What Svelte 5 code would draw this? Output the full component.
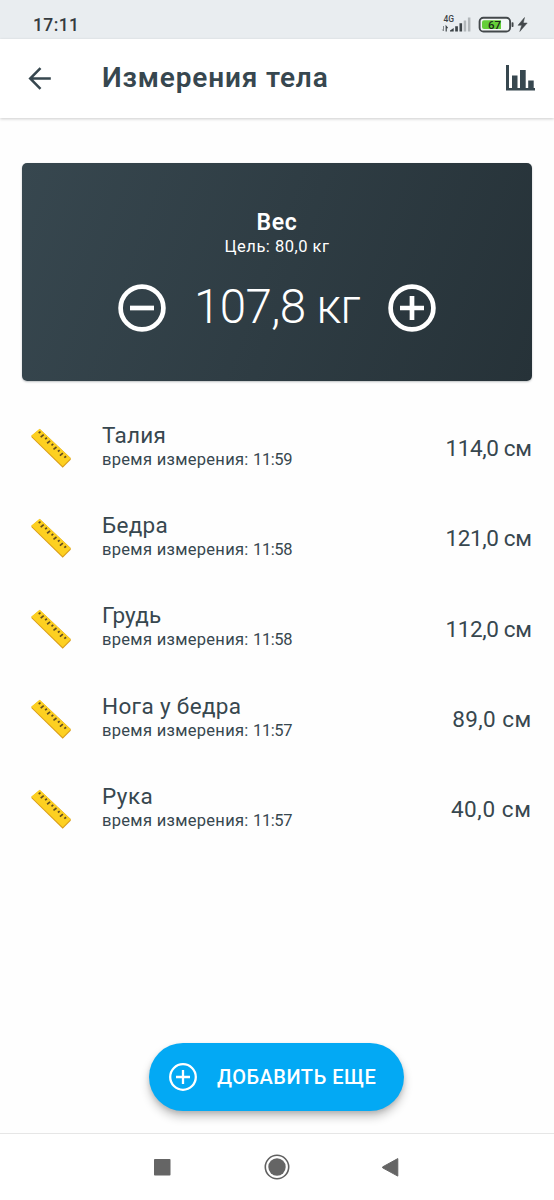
<script>
  const measurements = [
    { name: 'Талия', time: '11:59', value: '114,0 см', nameGap: 0.3, valueGap: -0.38 },
    { name: 'Бедра', time: '11:58', value: '121,0 см', nameGap: 0.3, valueGap: -0.38 },
    { name: 'Грудь', time: '11:58', value: '112,0 см', nameGap: 0.15, valueGap: -0.38 },
    { name: 'Нога у бедра', time: '11:57', value: '89,0 см', nameGap: 0.35, valueGap: 0.42 },
    { name: 'Рука', time: '11:57', value: '40,0 см', nameGap: 0.45, valueGap: 0.6 }
  ];
  const ticks = [0, 1, 2, 3, 4, 5, 6, 7, 8];
</script>

<div class="screen">
  <div class="status">
    <span class="clock">17:11</span>
    <svg class="indicators" width="90" height="24" viewBox="440 12 90 24">
      <text x="443.5" y="22" font-size="8.500" font-weight="500" fill="#3c4347">4G</text>
      <path d="M443.500 26v5M442.300 29.500l1.200 1.500" stroke="#85898c" fill="none" />
      <path d="M446.200 31.500v-5l1.400 1.700" stroke="#3c4347" stroke-width="1.200" fill="none" />
      <path d="M450 31.500v-1l3.700-2.500v3.500zM455.200 26.200h2.700v5.300h-2.700zM459.500 23.200h2.600v8.300h-2.600z" fill="#3c4347" />
      <path d="M463.700 20.500h2.500v11h-2.500zM467.900 17.500h2.500v14h-2.500z" fill="#b2b7ba" />
      <rect x="479.600" y="17.700" width="30.500" height="13.800" rx="3.800" fill="#f4f7f7" stroke="#43484b" stroke-width="1.900" />
      <path d="M484 20.200h17v8.800H484a2 2 0 0 1-2-2v-4.800a2 2 0 0 1 2-2z" fill="#65cf38" />
      <rect x="511.600" y="22.300" width="1.900" height="4.700" rx=".7" fill="#43484b" />
      <text x="494.500" y="28.700" text-anchor="middle" font-size="11.500" font-weight="500" fill="#1d2a1c">67</text>
      <path d="M524.500 17.500 518 25.300h3.700L519.800 31.500l7.400-8.500h-3.900z" fill="#43484b" stroke="#43484b" stroke-width=".5" />
    </svg>
  </div>

  <header>
    <button class="back" aria-label="Назад">
      <svg width="24" height="24" viewBox="0 0 24 24" fill="none" stroke="#37474f" stroke-width="2.500">
        <path d="M22.800 11.500H2.500M12.500 1.200 2.200 11.500 12.500 21.800" />
      </svg>
    </button>
    <h1>Измерения тела</h1>
    <button class="chart" aria-label="Статистика">
      <svg width="30" height="27" viewBox="0 0 30 27" fill="#37474f">
        <path d="M0 0h3v23h3V10.500h5.500V23H14V5h5.700v18h2.500v-7.500h5.500V23H29v2.500H0z" />
      </svg>
    </button>
  </header>

  <main>
    <section class="card">
      <h2>Вес</h2>
      <p class="goal">Цель: 80,0 кг</p>
      <div class="stepper">
        <button aria-label="Уменьшить">
          <svg width="48" height="48" viewBox="0 0 48 48" fill="none" stroke="#fff" stroke-width="4.700">
            <circle cx="24" cy="24" r="21.400" /><path d="M12 24h24" />
          </svg>
        </button>
        <span class="weight">107,8 кг</span>
        <button aria-label="Увеличить">
          <svg width="48" height="48" viewBox="0 0 48 48" fill="none" stroke="#fff" stroke-width="4.700">
            <circle cx="24" cy="24" r="21.400" /><path d="M12 24h24M24 12v24" />
          </svg>
        </button>
      </div>
    </section>

    <ul>
      {#each measurements as m}
        <li>
          <svg class="ruler" width="42" height="42" viewBox="0 0 42 42">
            <path d="M1.800 9.400 32.700 39.800 40.700 31.800V30L9.800 1 1.300 8z" fill="#d99b16" />
            <path d="M1.200 7.800 9.600.8 40.700 30.300 32.700 38.300z" fill="#fdd021" />
            {#each ticks as t}
              <path
                d={`M${10.5 + t * 3.2} ${3.6 + t * 3.08}l${t % 2 ? -3 : -1.8} ${t % 2 ? 2.4 : 1.4}`}
                stroke="#614d22"
                stroke-width="1.700"
              />
            {/each}
          </svg>
          <div class="info">
            <span class="name" style:letter-spacing={`${m.nameGap}px`}>{m.name}</span>
            <span class="time">время измерения: <span class="hour">{m.time}</span></span>
          </div>
          <span class="value" style:letter-spacing={`${m.valueGap}px`}>{m.value}</span>
        </li>
      {/each}
    </ul>

    <button class="add">
      <svg width="28" height="28" viewBox="0 0 28 28" fill="none" stroke="#fff" stroke-width="2.300">
        <circle cx="14" cy="14" r="12.800" /><path d="M7 14h14M14 7v14" />
      </svg>
      <span>ДОБАВИТЬ ЕЩЕ</span>
    </button>
  </main>

  <nav>
    <svg width="17" height="17" viewBox="0 0 17 17"><rect width="16.500" height="16.500" rx=".8" fill="#656565" /></svg>
    <svg width="26" height="26" viewBox="0 0 26 26">
      <circle cx="13" cy="13" r="11.700" fill="none" stroke="#606060" stroke-width="1.600" />
      <circle cx="13" cy="13" r="8.700" fill="#656565" />
    </svg>
    <svg width="17" height="19" viewBox="0 0 17 19"><path d="M15.800.6v17.500L.6 9.800v-.9z" fill="#656565" stroke="#656565" stroke-linejoin="round" /></svg>
  </nav>
</div>

<style>
  :global(body) {
    margin: 0;
    background: #fefefe;
  }
  .screen {
    box-sizing: border-box;
    width: 554px;
    height: 1200px;
    display: flex;
    flex-direction: column;
    overflow: hidden;
    font-family: Roboto, 'Noto Sans', sans-serif;
    color: #37474f;
    background: #fefefe;
  }
  button {
    padding: 0;
    border: 0;
    background: none;
    font: inherit;
    color: inherit;
    display: flex;
  }
  h1,
  h2,
  p,
  ul {
    margin: 0;
    padding: 0;
  }
  .status {
    height: 39px;
    flex: none;
    display: flex;
    justify-content: space-between;
    background: #e9edf0;
  }
  .clock {
    padding: 15px 0 0 33px;
    font-size: 17.500px;
    line-height: 21px;
    font-weight: 500;
    color: #353b3f;
    letter-spacing: 0.4px;
  }
  .indicators {
    margin: 12px 24px 0 0;
  }
  header {
    height: 79px;
    flex: none;
    display: flex;
    align-items: center;
    background: #fff;
    box-shadow: 0 1px 3px rgba(0, 0, 0, 0.2);
  }
  .back {
    width: 102px;
    padding-left: 28px;
    box-sizing: border-box;
  }
  h1 {
    flex: 1;
    padding-bottom: 1px;
    font-size: 28px;
    line-height: 36px;
    font-weight: 600;
    letter-spacing: 0.85px;
  }
  .chart {
    margin-right: 18px;
  }
  main {
    flex: 1;
    display: flex;
    flex-direction: column;
    padding: 45px 22px 22px;
  }
  .card {
    box-sizing: border-box;
    height: 218px;
    width: 510px;
    padding-top: 45px;
    display: flex;
    flex-direction: column;
    align-items: center;
    border-radius: 5px;
    color: #fff;
    background: linear-gradient(110deg, #37474f, #263238);
    box-shadow: 0 1px 2px rgba(38, 50, 56, 0.3);
  }
  h2 {
    font-size: 23px;
    line-height: 29px;
    font-weight: 600;
    letter-spacing: 0.6px;
  }
  .goal {
    font-size: 16.500px;
    line-height: 20px;
    letter-spacing: 0.5px;
  }
  .stepper {
    width: 318px;
    margin-top: 21px;
    display: flex;
    align-items: center;
    justify-content: space-between;
    height: 60px;
  }
  .weight {
    font-size: 47.500px;
    line-height: 60px;
    font-weight: 300;
    letter-spacing: -0.6px;
    padding-bottom: 2px;
    white-space: nowrap;
  }
  ul {
    margin-top: 22px;
    list-style: none;
  }
  li {
    height: 90.300px;
    display: flex;
    align-items: center;
  }
  .ruler {
    margin: 2px 30px 0 8px;
    flex: none;
  }
  .info {
    flex: 1;
    display: flex;
    flex-direction: column;
    padding-bottom: 4px;
  }
  .name {
    font-size: 22.500px;
    line-height: 26px;
  }
  .time {
    font-size: 16.500px;
    line-height: 23px;
    letter-spacing: 0.3px;
  }
  .hour {
    letter-spacing: -0.4px;
  }
  .value {
    padding-right: 0.5px;
    font-size: 22.500px;
    line-height: 28px;
    white-space: nowrap;
  }
  .add {
    box-sizing: border-box;
    width: 255px;
    height: 68px;
    margin-top: auto;
    margin-left: 127px;
    align-self: flex-start;
    align-items: center;
    gap: 20px;
    padding-left: 20px;
    border-radius: 34px;
    background: #03a9f4;
    color: #fff;
    font-size: 20px;
    font-weight: 500;
    letter-spacing: 0.5px;
    box-shadow: 0 6px 10px rgba(0, 0, 0, 0.22), 0 2px 4px rgba(0, 0, 0, 0.12);
  }
  nav {
    box-sizing: border-box;
    height: 67px;
    flex: none;
    display: flex;
    align-items: center;
    justify-content: space-between;
    padding: 0 155px 0 154px;
    border-top: 1px solid #e6e6e6;
    background: #fff;
  }
</style>
